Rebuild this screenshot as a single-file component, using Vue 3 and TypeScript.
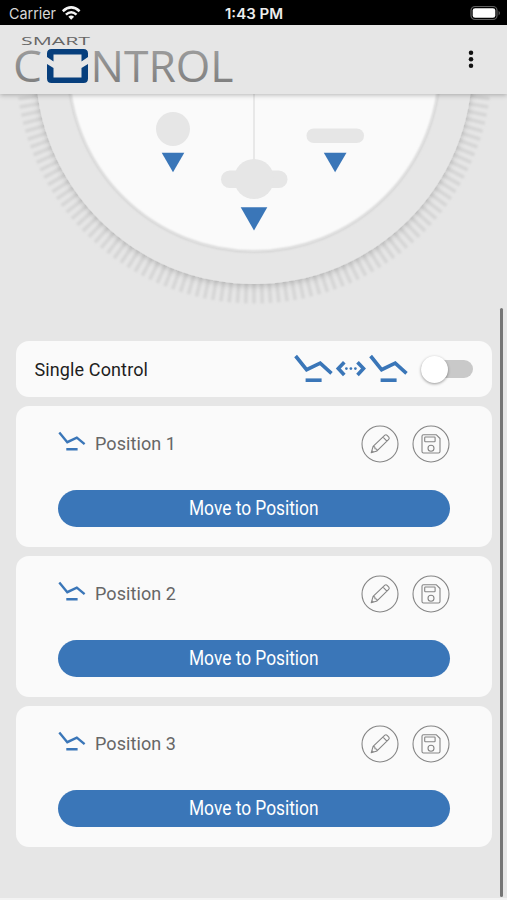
<script setup lang="ts">
interface Position {
  id: number
  name: string
}

const positions: Position[] = [
  { id: 1, name: 'Position 1' },
  { id: 2, name: 'Position 2' },
  { id: 3, name: 'Position 3' },
]

const tickAngles: number[] = Array.from({ length: 91 }, (_, i) => i * 2 - 90)
</script>

<template>
  <div class="screen">
    <div class="status">
      <div class="carrier">
        <svg width="210" height="26" viewBox="0 0 210 26">
          <text x="9" y="18.7" font-size="15" textLength="47" lengthAdjust="spacingAndGlyphs" fill="#d8d8d8">Carrier</text>
          <g fill="none" stroke="#f4f4f4" stroke-width="2.5">
            <path d="M62.8 11.2 Q71.2 3.6 79.6 11.2" />
            <path d="M65.9 14.6 Q71.2 9.8 76.5 14.6" />
          </g>
          <path d="M68.3 16.7 Q71.2 14.2 74.1 16.7 L71.2 19.8 Z" fill="#f4f4f4" />
        </svg>
      </div>
      <svg class="clock" width="70" height="26" viewBox="0 0 70 26">
        <text x="6" y="18.7" font-size="14" font-weight="600" textLength="58" lengthAdjust="spacingAndGlyphs" fill="#ededed">1:43 PM</text>
      </svg>
      <svg class="battery" width="40" height="26" viewBox="0 0 40 26">
        <rect x="4" y="6.5" width="26" height="13" rx="4" fill="none" stroke="#606060" stroke-width="1.2" />
        <rect x="5.7" y="8.2" width="22.6" height="9.6" rx="2.4" fill="#fff" />
        <path d="M31.6 10.7 Q34.3 13 31.6 15.4 Z" fill="#606060" />
      </svg>
    </div>

    <header class="header">
      <svg class="logo" width="240" height="68" viewBox="0 26 240 68">
        <defs>
          <linearGradient id="metal" gradientUnits="userSpaceOnUse" x1="0" y1="49" x2="0" y2="83">
            <stop offset="0" stop-color="#9c9c9c" />
            <stop offset="1" stop-color="#808080" />
          </linearGradient>
        </defs>
        <text x="21" y="45" font-size="11" textLength="69" lengthAdjust="spacingAndGlyphs" fill="#666">SMART</text>
        <g class="word" fill="url(#metal)" font-size="44.5">
          <text x="13" y="82.3" textLength="29" lengthAdjust="spacingAndGlyphs">C</text>
          <text x="90.5" y="82.3" textLength="143" lengthAdjust="spacingAndGlyphs">NTROL</text>
        </g>
        <g fill="#073f7d">
          <path d="M47 57 V53.5 Q47 49 51.5 49 H83.5 Q88 49 88 53.5 V57 L81.5 61.5 V54.5 H53.5 V61.5 Z" />
          <path d="M47 64 L53.5 68 V77.5 H81.5 V68 L88 64 V78.5 Q88 83 83.5 83 H51.5 Q47 83 47 78.5 Z" />
        </g>
      </svg>
      <svg class="menu" width="12" height="24" viewBox="0 0 12 24">
        <circle v-for="y in [5.7, 12.2, 18.7]" :key="y" cx="6" :cy="y" r="2.25" fill="#111" />
      </svg>
    </header>

    <main class="content">
      <svg class="dial" width="507" height="247" viewBox="0 94 507 247">
        <defs>
          <filter id="ringShadow" x="-10%" y="-10%" width="120%" height="120%">
            <feDropShadow dx="0" dy="2" stdDeviation="3" flood-color="#000" flood-opacity="0.18" />
          </filter>
          <filter id="soft" x="-5%" y="-5%" width="110%" height="110%"><feGaussianBlur stdDeviation="0.9" /></filter>
          <filter id="tickSoft" x="-5%" y="-5%" width="110%" height="110%"><feGaussianBlur stdDeviation="0.8" /></filter>
        </defs>
        <g filter="url(#tickSoft)" stroke="#d6d6d6" stroke-width="3.6">
          <line v-for="a in tickAngles" :key="a" x1="254" y1="282" x2="254" y2="303.5" :transform="`rotate(${a} 254 65.7)`" />
        </g>
        <circle cx="254" cy="65.7" r="218.3" fill="#e6e6e6" filter="url(#ringShadow)" />
        <circle cx="254" cy="65.7" r="186.2" fill="#fafafa" />
        <circle cx="254" cy="65.7" r="185.8" fill="none" stroke="#d0d0d0" stroke-width="2" filter="url(#soft)" />
        <rect x="253" y="94" width="2" height="70" fill="#e8e8e8" />
        <g fill="#e6e6e6">
          <circle cx="173" cy="129" r="17" />
          <rect x="306.5" y="128.5" width="57.5" height="14.5" rx="7.25" />
          <rect x="221" y="170.5" width="66.5" height="17.5" rx="8.75" />
          <circle cx="254" cy="179" r="20" />
        </g>
        <g fill="#3a76b8">
          <path d="M161.7 152.8 H184.3 L173 172.3 Z" />
          <path d="M323.8 152.8 H346.5 L335.1 172.3 Z" />
          <path d="M240.7 207.2 H267.3 L254 230.4 Z" />
        </g>
      </svg>

      <section class="card single">
        <span class="single-label">Single Control</span>
        <svg class="single-icons" width="116" height="32" viewBox="292 353 116 32" fill="none" stroke="#3a76b8">
          <g v-for="dx in [0, 75]" :key="dx" :transform="`translate(${dx} 0)`" stroke-width="3.6">
            <path d="M295.6 356 L306.6 369.7 L320.2 363.2 L331.5 373.4" />
            <path d="M305.6 380.2 H321.6" />
          </g>
          <path d="M344.3 362.2 L338.3 368.6 L344.3 375 M357.5 362.2 L363.5 368.6 L357.5 375" stroke-width="3.6" />
          <g fill="#3a76b8" stroke="none">
            <circle cx="346.4" cy="368.6" r="1.35" />
            <circle cx="350.9" cy="368.6" r="1.35" />
            <circle cx="355.4" cy="368.6" r="1.35" />
          </g>
        </svg>
        <div class="switch"><span class="knob"></span></div>
      </section>

      <section v-for="position in positions" :key="position.id" class="card position">
        <div class="position-head">
          <svg class="bed" width="28" height="22" viewBox="0 0 28 22" fill="none" stroke="#3a76b8" stroke-width="2.4">
            <path d="M1.3 1.6 L9.3 11.2 L18.8 6.6 L26.6 13.2 M8.3 18.2 H19.6" />
          </svg>
          <span class="name">{{ position.name }}</span>
          <button class="round" aria-label="Edit">
            <svg width="38" height="38" viewBox="0 0 38 38" fill="none" stroke="#858585" stroke-width="1.1" stroke-linejoin="round">
              <circle cx="19" cy="19" r="18" />
              <path d="M10.2 27.8 L12.1 21.4 L23.9 10.2 Q25 9.2 26.1 10.3 L27.8 12.1 Q28.8 13.2 27.7 14.3 L16 25.9 Z M12.1 21.4 Q14.2 21.4 14 23.7 Q16.2 23.6 16 25.9 M22 12.1 L25.9 16.1 M11 25.7 L12.3 27.1" />
            </svg>
          </button>
          <button class="round" aria-label="Save">
            <svg width="38" height="38" viewBox="0 0 38 38" fill="none" stroke="#858585" stroke-width="1.1" stroke-linejoin="round">
              <circle cx="19" cy="19" r="18" />
              <path d="M11.5 9.8 H24.4 L28 13.5 V26.5 Q28 28 26.5 28 H11.5 Q10 28 10 26.5 V11.3 Q10 9.8 11.5 9.8 Z" />
              <rect x="12.7" y="12" width="10.4" height="4.8" rx="0.7" />
              <circle cx="19" cy="23.3" r="3" />
            </svg>
          </button>
        </div>
        <button class="move">
          <svg width="132" height="30" viewBox="0 0 132 30">
            <text x="1" y="21" font-size="20" textLength="129.5" lengthAdjust="spacingAndGlyphs" fill="#fff">Move to Position</text>
          </svg>
        </button>
      </section>
    </main>
    <div class="scrollbar"></div>
  </div>
</template>

<style>
body {
  background: #e6e6e6;
}
</style>

<style scoped>
.screen {
  position: relative;
  box-sizing: border-box;
  width: 507px;
  height: 900px;
  overflow: hidden;
  background: #e6e6e6;
  border-bottom: 2px solid #f3f3f3;
  font-family: Roboto, "Liberation Sans", sans-serif;
}
svg {
  display: block;
}
.status {
  display: grid;
  grid-template-columns: 219px 70px 1fr;
  height: 25px;
  background: #000;
  font-family: Inter, "Liberation Sans", sans-serif;
}
.battery {
  justify-self: end;
}
.header {
  position: relative;
  z-index: 1;
  display: flex;
  justify-content: space-between;
  height: 69px;
  background: #e6e6e6;
  box-shadow: 0 1px 5px rgba(0, 0, 0, 0.28);
}
.logo {
  margin-top: 1px;
  font-family: "Open Sans", "Noto Sans", sans-serif;
}
.word {
  font-weight: 400;
}
.menu {
  margin: 22px 30px 0 0;
}
.card {
  box-sizing: border-box;
  width: 476.5px;
  margin-left: 15.5px;
  background: #fafafa;
  border-radius: 13px;
}
.single {
  display: flex;
  align-items: center;
  height: 56px;
  padding: 0 19px 0 19px;
}
.single-label {
  font-size: 18px;
  letter-spacing: 0.12px;
  color: #1e1e1e;
}
.single-icons {
  margin: 0 13px 0 auto;
}
.switch {
  display: flex;
  align-items: center;
  width: 52px;
  height: 18px;
  border-radius: 9px;
  background: #c9c9c9;
}
.knob {
  width: 27px;
  height: 27px;
  border-radius: 50%;
  background: #fff;
  box-shadow: 0 1px 3px rgba(0, 0, 0, 0.4);
}
.position {
  height: 141px;
  margin-top: 9px;
  padding: 18.5px 42.5px 0;
}
.position-head {
  display: flex;
  align-items: center;
  height: 38px;
}
.bed {
  margin-top: -4px;
}
.name {
  flex: 1;
  margin-top: -1px;
  margin-left: 9px;
  font-size: 18px;
  letter-spacing: 0.08px;
  color: #666;
}
.round {
  padding: 0;
  border: 0;
  background: none;
}
.round + .round {
  margin-left: 13px;
}
.move {
  display: flex;
  align-items: center;
  justify-content: center;
  width: 391.5px;
  height: 37px;
  margin-top: 27.5px;
  padding: 0;
  border: 0;
  border-radius: 19px;
  background: #3a76b8;
  font-family: Roboto, "Liberation Sans", sans-serif;
}
.scrollbar {
  position: absolute;
  left: 499.5px;
  top: 308px;
  width: 3.5px;
  height: 589px;
  border-radius: 2px;
  background: #757575;
}
</style>
